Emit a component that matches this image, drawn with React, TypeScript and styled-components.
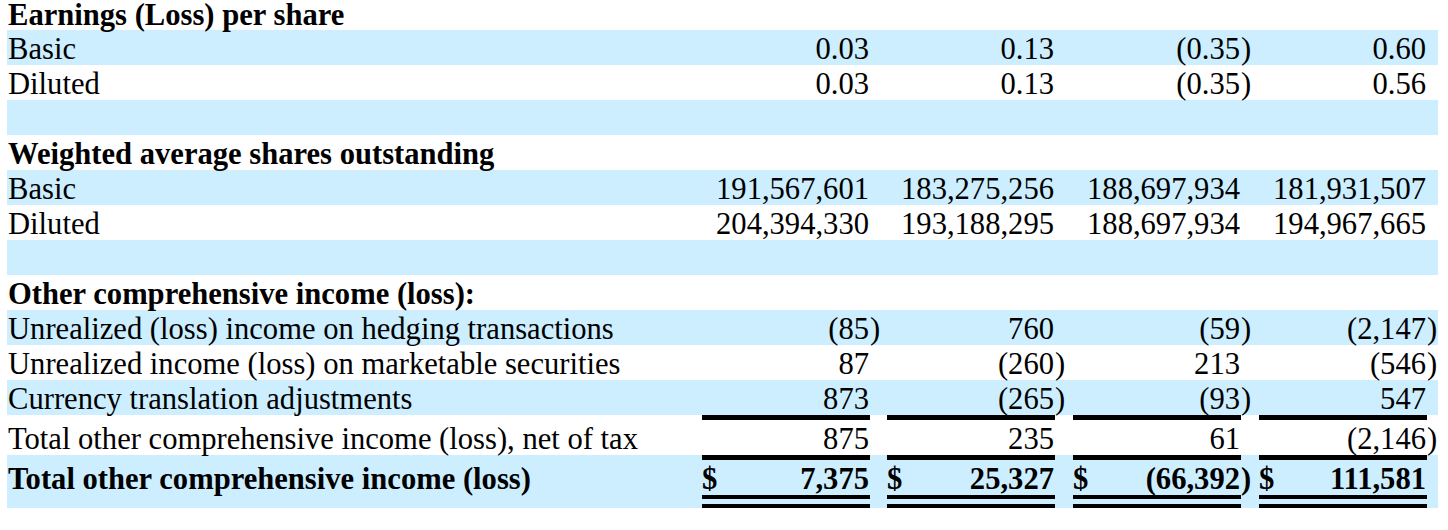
import React from "react";
import styled, { createGlobalStyle, css } from "styled-components";

const GlobalStyle = createGlobalStyle`
  html, body {
    margin: 0;
    padding: 0;
    background: #ffffff;
  }
  body {
    font-family: "Liberation Serif", "Times New Roman", Times, serif;
    color: #000000;
  }
`;

const Page = styled.div`
  padding-left: 7px;
  overflow: hidden;
`;

const Table = styled.table`
  border-collapse: separate;
  border-spacing: 0;
  table-layout: fixed;
  width: 1431px;
  font-size: 30.6px;
`;

const Col = styled.col<{ $w: number }>`
  width: ${(p) => p.$w}px;
`;

type Band = "blue" | "white";
type Rule = "none" | "top" | "total";

const Row = styled.tr<{ $band: Band; $bold?: boolean }>`
  background: ${(p) => (p.$band === "blue" ? "#cceeff" : "#ffffff")};
  font-weight: ${(p) => (p.$bold ? 700 : 400)};
`;

const cellBase = css`
  padding: 4px 0 0 0;
  line-height: 31px;
  white-space: nowrap;
  vertical-align: baseline;
  overflow: visible;
`;

const ruleStyles = css<{ $rule?: Rule }>`
  ${(p) =>
    p.$rule === "top" &&
    css`
      border-top: 5px solid #000;
    `}
  ${(p) =>
    p.$rule === "total" &&
    css`
      border-top: 5px solid #000;
      border-bottom: 13px double #000;
    `}
`;

const LabelCell = styled.td<{ $heading?: boolean; $compact?: boolean }>`
  ${cellBase};
  text-align: left;
  padding-left: 1px;
  font-weight: ${(p) => (p.$heading ? 700 : "inherit")};
  ${(p) =>
    p.$compact &&
    css`
      padding-top: 1px;
      line-height: 29px;
    `}
`;

const DollarCell = styled.td<{ $rule?: Rule }>`
  ${cellBase};
  text-align: left;
  ${ruleStyles};
`;

const ValueCell = styled.td<{ $rule?: Rule }>`
  ${cellBase};
  text-align: right;
  padding-right: 1px;
  ${ruleStyles};
`;

const ParenCell = styled.td`
  ${cellBase};
  text-align: left;
`;

type DataRow =
  | { kind: "heading"; label: string; compact?: boolean }
  | { kind: "blank" }
  | {
      kind: "data";
      label: string;
      band: Band;
      values: string[];
      rule?: Rule;
      bold?: boolean;
      dollar?: boolean;
    };

const rows: DataRow[] = [
  { kind: "heading", label: "Earnings (Loss) per share", compact: true },
  { kind: "data", label: "Basic", band: "blue", values: ["0.03", "0.13", "(0.35)", "0.60"] },
  { kind: "data", label: "Diluted", band: "white", values: ["0.03", "0.13", "(0.35)", "0.56"] },
  { kind: "blank" },
  { kind: "heading", label: "Weighted average shares outstanding" },
  {
    kind: "data",
    label: "Basic",
    band: "blue",
    values: ["191,567,601", "183,275,256", "188,697,934", "181,931,507"],
  },
  {
    kind: "data",
    label: "Diluted",
    band: "white",
    values: ["204,394,330", "193,188,295", "188,697,934", "194,967,665"],
  },
  { kind: "blank" },
  { kind: "heading", label: "Other comprehensive income (loss):" },
  {
    kind: "data",
    label: "Unrealized (loss) income on hedging transactions",
    band: "blue",
    values: ["(85)", "760", "(59)", "(2,147)"],
  },
  {
    kind: "data",
    label: "Unrealized income (loss) on marketable securities",
    band: "white",
    values: ["87", "(260)", "213", "(546)"],
  },
  {
    kind: "data",
    label: "Currency translation adjustments",
    band: "blue",
    values: ["873", "(265)", "(93)", "547"],
  },
  {
    kind: "data",
    label: "Total other comprehensive income (loss), net of tax",
    band: "white",
    values: ["875", "235", "61", "(2,146)"],
    rule: "top",
  },
  {
    kind: "data",
    label: "Total other comprehensive income (loss)",
    band: "blue",
    values: ["7,375", "25,327", "(66,392)", "111,581"],
    rule: "total",
    bold: true,
    dollar: true,
  },
];

const groups = [0, 1, 2, 3];
const parenWidths = [17, 18, 18, 11];

function splitParen(v: string): [string, string] {
  return v.endsWith(")") ? [v.slice(0, -1), ")"] : [v, ""];
}

export default function App() {
  return (
    <>
      <GlobalStyle />
      <Page>
        <Table>
          <colgroup>
            <Col $w={695} />
            {groups.map((g) => (
              <React.Fragment key={g}>
                <Col $w={12} />
                <Col $w={156} />
                <Col $w={parenWidths[g]} />
              </React.Fragment>
            ))}
          </colgroup>
          <tbody>
            {rows.map((r, i) => {
              if (r.kind === "heading") {
                return (
                  <Row key={i} $band="white">
                    <LabelCell $heading $compact={r.compact} colSpan={13}>
                      {r.label}
                    </LabelCell>
                  </Row>
                );
              }
              if (r.kind === "blank") {
                return (
                  <Row key={i} $band="blue">
                    <LabelCell colSpan={13}>&nbsp;</LabelCell>
                  </Row>
                );
              }
              return (
                <Row key={i} $band={r.band} $bold={r.bold}>
                  <LabelCell>{r.label}</LabelCell>
                  {r.values.map((v, g) => {
                    const [num, paren] = splitParen(v);
                    return (
                      <React.Fragment key={g}>
                        <DollarCell $rule={r.rule}>{r.dollar ? "$" : ""}</DollarCell>
                        <ValueCell $rule={r.rule}>{num}</ValueCell>
                        <ParenCell>{paren}</ParenCell>
                      </React.Fragment>
                    );
                  })}
                </Row>
              );
            })}
          </tbody>
        </Table>
      </Page>
    </>
  );
}
